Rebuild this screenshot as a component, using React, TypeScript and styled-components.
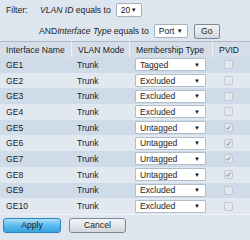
import React from "react";
import styled, { createGlobalStyle } from "styled-components";

const GlobalStyle = createGlobalStyle`
  html, body {
    margin: 0;
    padding: 0;
    background: #dde5ee;
  }
  body {
    font-family: "Liberation Sans", Arial, sans-serif;
    font-size: 8.6px;
    color: #1c1c1c;
  }
`;

const Page = styled.div`
  width: 250px;
  height: 240px;
  overflow: hidden;
  background: #dde5ee;
`;

const FilterArea = styled.div`
  display: flex;
  flex-direction: column;
  gap: 7px;
  box-sizing: border-box;
  height: 41px;
  padding: 3px 0 0 6px;
`;

const FilterLine = styled.div<{ indent?: number }>`
  display: flex;
  align-items: center;
  height: 14px;
  padding-left: ${(p) => p.indent ?? 0}px;
`;

const Label = styled.span<{ width?: number }>`
  display: inline-block;
  width: ${(p) => (p.width ? `${p.width}px` : "auto")};
  white-space: nowrap;
`;

const Ital = styled.em`
  font-style: italic;
`;

const SmallSelect = styled.div<{ width: number }>`
  display: flex;
  align-items: center;
  justify-content: space-between;
  box-sizing: border-box;
  width: ${(p) => p.width}px;
  height: 14px;
  margin-left: 5px;
  padding: 0 4px 0 4px;
  background: #fff;
  border: 1px solid #a8b2bd;
  border-radius: 2px;
`;

const Arrow = styled.span`
  font-size: 6px;
  color: #111;
`;

const GoButton = styled.button`
  box-sizing: border-box;
  width: 26px;
  height: 15px;
  margin-left: 6px;
  padding: 0;
  border: 1px solid #7d8a96;
  border-radius: 2px;
  background: linear-gradient(#f3f5f7, #cfd6dd);
  font-family: inherit;
  font-size: 8.6px;
  color: #222;
`;

const Grid = styled.div`
  display: grid;
  grid-template-columns: 71px 58px 83px 38px;
  grid-template-rows: 16px;
  grid-auto-rows: 15.7px;
  width: 250px;
`;

const HeadCell = styled.div`
  display: flex;
  align-items: center;
  padding-left: 6px;
  box-sizing: border-box;
  background: #d5dee8;
  border-top: 1px solid #aeb9c5;
  border-left: 1px solid #eef2f6;
  white-space: nowrap;
  &:first-child {
    border-left: none;
  }
`;

const Cell = styled.div<{ dark: boolean; pad?: number }>`
  display: flex;
  align-items: center;
  padding-left: ${(p) => p.pad ?? 6}px;
  white-space: nowrap;
  background: ${(p) => (p.dark ? "#cfdbe9" : "#e1e8f0")};
`;

const RowSelect = styled.div`
  display: flex;
  align-items: center;
  justify-content: space-between;
  box-sizing: border-box;
  width: 71px;
  height: 13px;
  padding: 0 5px 0 4px;
  background: #fff;
  border: 1px solid #b3bdc8;
  border-radius: 1px;
`;

const Check = styled.div`
  position: relative;
  box-sizing: border-box;
  width: 9px;
  height: 9px;
  margin-left: 12px;
  border: 1px solid #c2c9d1;
  border-radius: 2px;
  background: #e4e8ed;
`;

const Footer = styled.div`
  display: flex;
  gap: 8px;
  padding: 3px 0 0 3px;
  border-top: 1px solid #eef2f6;
`;

const ActionButton = styled.button<{ primary?: boolean }>`
  box-sizing: border-box;
  width: ${(p) => (p.primary ? 58 : 57)}px;
  height: 15px;
  padding: 0;
  border-radius: 3px;
  font-family: inherit;
  font-size: 8.6px;
  color: #1a1a1a;
  border: 1px solid ${(p) => (p.primary ? "#2b7fb8" : "#7d8792")};
  background: ${(p) =>
    p.primary
      ? "linear-gradient(#a9e1fb, #5bbbef 50%, #3aa3df)"
      : "linear-gradient(#f2f4f6, #d2d8de)"};
`;

const rows = [
  ["GE1", "Tagged", false],
  ["GE2", "Excluded", false],
  ["GE3", "Excluded", false],
  ["GE4", "Excluded", false],
  ["GE5", "Untagged", true],
  ["GE6", "Untagged", true],
  ["GE7", "Untagged", true],
  ["GE8", "Untagged", true],
  ["GE9", "Excluded", false],
  ["GE10", "Excluded", false],
] as const;

const Tick = () => (
  <svg
    width="7"
    height="7"
    viewBox="0 0 7 7"
    style={{ position: "absolute", left: 0, top: 0 }}
  >
    <path d="M1.2 3.6 L2.8 5.1 L5.8 1.6" fill="none" stroke="#9aa3ad" strokeWidth="1.1" />
  </svg>
);

export default function App() {
  return (
    <Page>
      <GlobalStyle />
      <FilterArea>
        <FilterLine>
          <Label width={34}>Filter:</Label>
          <Label>
            <Ital>VLAN ID</Ital> equals to
          </Label>
          <SmallSelect width={26}>
            20 <Arrow>▼</Arrow>
          </SmallSelect>
        </FilterLine>
        <FilterLine indent={33}>
          <Label>
            AND<Ital>Interface Type</Ital> equals to
          </Label>
          <SmallSelect width={34}>
            Port <Arrow>▼</Arrow>
          </SmallSelect>
          <GoButton>Go</GoButton>
        </FilterLine>
      </FilterArea>
      <Grid>
        <HeadCell>Interface Name</HeadCell>
        <HeadCell>VLAN Mode</HeadCell>
        <HeadCell>Membership Type</HeadCell>
        <HeadCell>PVID</HeadCell>
        {rows.map(([name, type, pvid], i) => (
          <React.Fragment key={name}>
            <Cell dark={i % 2 === 0}>{name}</Cell>
            <Cell dark={i % 2 === 0}>Trunk</Cell>
            <Cell dark={i % 2 === 0}>
              <RowSelect>
                {type} <Arrow>▼</Arrow>
              </RowSelect>
            </Cell>
            <Cell dark={i % 2 === 0} pad={0}>
              <Check>{pvid && <Tick />}</Check>
            </Cell>
          </React.Fragment>
        ))}
      </Grid>
      <Footer>
        <ActionButton primary>Apply</ActionButton>
        <ActionButton>Cancel</ActionButton>
      </Footer>
    </Page>
  );
}
